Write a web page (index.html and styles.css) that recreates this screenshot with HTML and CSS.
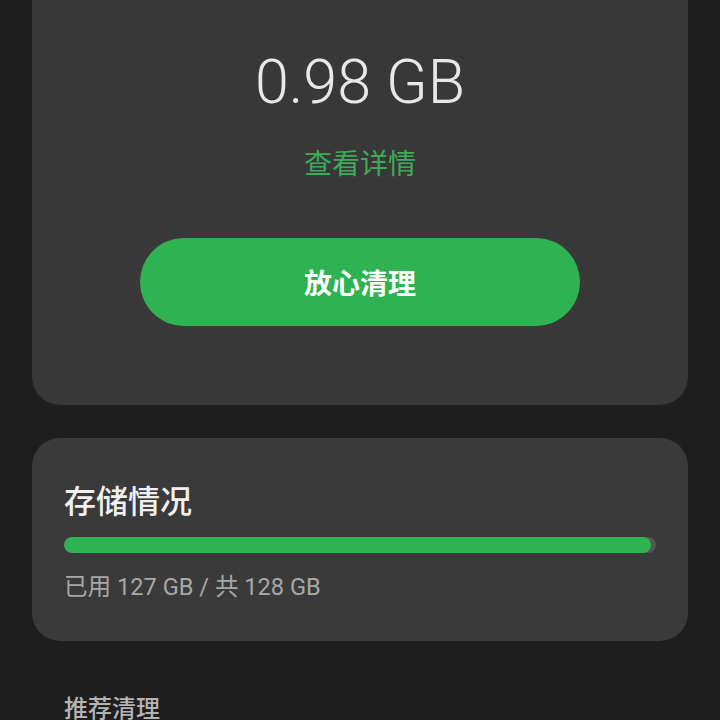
FILE: index.html
```html
<!DOCTYPE html>
<html lang="zh-CN">
<head>
<meta charset="utf-8">
<title>存储清理</title>
<link rel="stylesheet" href="styles.css">
</head>
<body>
<main class="page">
  <section class="card summary">
    <div class="amount">0.98 GB</div>
    <a class="details">查看详情</a>
    <button class="clean-btn">放心清理</button>
  </section>
  <section class="card storage">
    <h2 class="storage-title">存储情况</h2>
    <div class="bar"><div class="bar-fill" style="width: 99.2%"></div></div>
    <p class="storage-text">已用 127 GB / 共 128 GB</p>
  </section>
  <h3 class="section-head">推荐清理</h3>
</main>
</body>
</html>
```
FILE: styles.css
```css
html, body {
  margin: 0;
  padding: 0;
  background: #1e1e1e;
  height: 100%;
  overflow: hidden;
}
body {
  font-family: "Noto Sans CJK SC", "Noto Sans", sans-serif;
  color: #eeeeee;
}
.page {
  padding: 0 32px;
  display: flex;
  flex-direction: column;
}
.card {
  background: #383838;
  border-radius: 28px;
}
.summary {
  border-radius: 0 0 28px 28px;
  padding: 44px 0 79px;
  display: flex;
  flex-direction: column;
  align-items: center;
}
.amount {
  font-family: Roboto, "Noto Sans", sans-serif;
  font-weight: 300;
  font-size: 61px;
  line-height: 76px;
  color: #e8e8e8;
}
.details {
  margin-top: 22px;
  font-size: 28px;
  line-height: 40px;
  color: #3cab56;
}
.clean-btn {
  margin-top: 56px;
  width: 440px;
  height: 88px;
  border: none;
  border-radius: 44px;
  background: #2fb352;
  color: #ffffff;
  font-family: "Noto Sans CJK SC", sans-serif;
  font-weight: 700;
  font-size: 28px;
  padding: 0;
}
.storage {
  margin-top: 33px;
  padding: 41px 32px 39px;
  background: #3a3a3a;
}
.storage-title {
  margin: 0;
  font-size: 32px;
  line-height: 40px;
  font-weight: 500;
  color: #f0f0f0;
}
.bar {
  margin-top: 18px;
  height: 16px;
  border-radius: 8px;
  background: #555555;
  overflow: hidden;
}
.bar-fill {
  height: 100%;
  background: #2fb352;
  border-radius: 8px;
}
.storage-text {
  margin: 19px 0 0;
  font-family: Roboto, "Noto Sans CJK SC", sans-serif;
  font-size: 23.6px;
  line-height: 30px;
  color: #a8a8a8;
}
.section-head {
  margin: 50px 0 0 32px;
  font-size: 24px;
  line-height: 32px;
  font-weight: 500;
  color: #b4b4b4;
}
```
